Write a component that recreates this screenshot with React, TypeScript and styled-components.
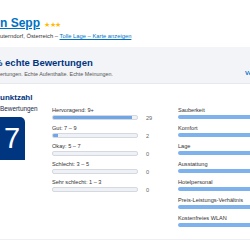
import React from 'react'
import styled, { createGlobalStyle } from 'styled-components'

const GlobalStyle = createGlobalStyle`
  html, body {
    margin: 0;
    padding: 0;
    background: #ffffff;
  }
  body {
    font-family: "Liberation Sans", Arial, sans-serif;
  }
`

const Page = styled.div`
  width: 250px;
  height: 250px;
  overflow: hidden;
  background: #ffffff;
`

const Header = styled.div`
  padding-top: 16px;
  height: 47px;
  box-sizing: border-box;
`

const TitleRow = styled.div`
  display: flex;
  align-items: baseline;
  gap: 4px;
  height: 15px;
`

const HotelName = styled.a`
  color: #0071c2;
  font-size: 12px;
  font-weight: bold;
  text-decoration: underline;
  line-height: 15px;
  white-space: nowrap;
`

const Stars = styled.span`
  color: #febb02;
  font-size: 7px;
  letter-spacing: -0.5px;
`

const Address = styled.div`
  font-size: 5.8px;
  color: #333333;
  line-height: 8px;
  margin-top: 1px;
  white-space: nowrap;
`

const TextLink = styled.a`
  color: #0071c2;
  text-decoration: underline;
`

const Band = styled.div`
  background: #f3f4f7;
  height: 37px;
  border-bottom: 1px solid #e6e8ec;
  display: flex;
  align-items: flex-start;
  justify-content: space-between;
  padding-top: 10px;
  box-sizing: border-box;
`

const BandText = styled.div`
  white-space: nowrap;
  overflow: hidden;
`

const BandTitle = styled.div`
  color: #003580;
  font-size: 9.5px;
  font-weight: bold;
  line-height: 11px;
  margin-left: -6px;
`

const BandSub = styled.div`
  color: #555555;
  font-size: 5.4px;
  line-height: 8px;
  margin-top: 2px;
`

const BandLink = styled.span`
  color: #0071c2;
  font-size: 6px;
  font-weight: bold;
  margin-top: 13px;
  width: 5px;
  overflow: hidden;
  white-space: nowrap;
`

const ScoreTitle = styled.div`
  color: #003580;
  font-size: 8px;
  font-weight: bold;
  line-height: 10px;
  margin-top: 9px;
`

const Scores = styled.div`
  display: grid;
  grid-template-columns: 52px 86px 40px 72px;
  margin-top: 1px;
  height: 135px;
  border-bottom: 1px solid #eeeff2;
`

const Summary = styled.div`
  display: flex;
  flex-direction: column;
`

const SummaryText = styled.div`
  color: #1a2b4c;
  font-size: 6.4px;
  line-height: 8px;
  margin-top: 1px;
`

const ScoreBox = styled.div`
  width: 25px;
  height: 43px;
  margin-top: 4px;
  background: #003580;
  border-radius: 0 5px 0 0;
  color: #ffffff;
  font-size: 29px;
  line-height: 43px;
  padding-left: 4px;
  box-sizing: border-box;
`

const Column = styled.div`
  display: flex;
  flex-direction: column;
`

const Row = styled.div`
  height: 18px;
  display: flex;
  flex-direction: column;
`

const Label = styled.div`
  color: #333333;
  font-size: 5.6px;
  line-height: 8px;
  margin-top: 2px;
  white-space: nowrap;
`

const Track = styled.div`
  height: 5px;
  margin-top: 1px;
  box-sizing: border-box;
  border: 1px solid #d5d9df;
  background: #eef1f5;
  border-radius: 2px;
  overflow: hidden;
`

const Fill = styled.div<{ $color?: string }>`
  height: 100%;
  background: ${({ $color }) => $color || '#6fa6e6'};
`

const CountRow = styled.div`
  height: 18px;
  color: #666666;
  font-size: 5.6px;
  line-height: 6px;
  padding-top: 11px;
  padding-left: 8px;
  box-sizing: border-box;
`

const CategoryBar = styled.div`
  height: 4px;
  margin-top: 1px;
  width: 90px;
  background: #7db2ec;
  border-radius: 2px 0 0 2px;
`

const histogram = [
  { label: 'Hervoragend: 9+', count: 29 },
  { label: 'Gut: 7 – 9', count: 2 },
  { label: 'Okay: 5 – 7', count: 0 },
  { label: 'Schlecht: 3 – 5', count: 0 },
  { label: 'Sehr schlecht: 1 – 3', count: 0 },
]

const categories = [
  'Sauberkeit',
  'Komfort',
  'Lage',
  'Ausstattung',
  'Hotelpersonal',
  'Preis-Leistungs-Verhältnis',
  'Kostenfreies WLAN',
]

const total = 31

export default function App() {
  return (
    <Page>
      <GlobalStyle />
      <Header>
        <TitleRow>
          <HotelName>n Sepp </HotelName>
          <Stars>★★★</Stars>
        </TitleRow>
        <Address>
          uterndorf, Österreich – <TextLink>Tolle Lage – Karte anzeigen</TextLink>
        </Address>
      </Header>
      <Band>
        <BandText>
          <BandTitle>% echte Bewertungen</BandTitle>
          <BandSub>ertungen. Echte Aufenthalte. Echte Meinungen.</BandSub>
        </BandText>
        <BandLink>Verifiziert</BandLink>
      </Band>
      <ScoreTitle>unktzahl</ScoreTitle>
      <Scores>
        <Summary>
          <SummaryText>Bewertungen</SummaryText>
          <ScoreBox>7</ScoreBox>
        </Summary>
        <Column>
          {histogram.map(h => (
            <Row key={h.label}>
              <Label>{h.label}</Label>
              <Track>
                <Fill style={{ width: `${(h.count / total) * 100}%` }} />
              </Track>
            </Row>
          ))}
        </Column>
        <Column>
          {histogram.map(h => (
            <CountRow key={h.label}>{h.count}</CountRow>
          ))}
        </Column>
        <Column>
          {categories.map(c => (
            <Row key={c}>
              <Label>{c}</Label>
              <CategoryBar />
            </Row>
          ))}
        </Column>
      </Scores>
    </Page>
  )
}
